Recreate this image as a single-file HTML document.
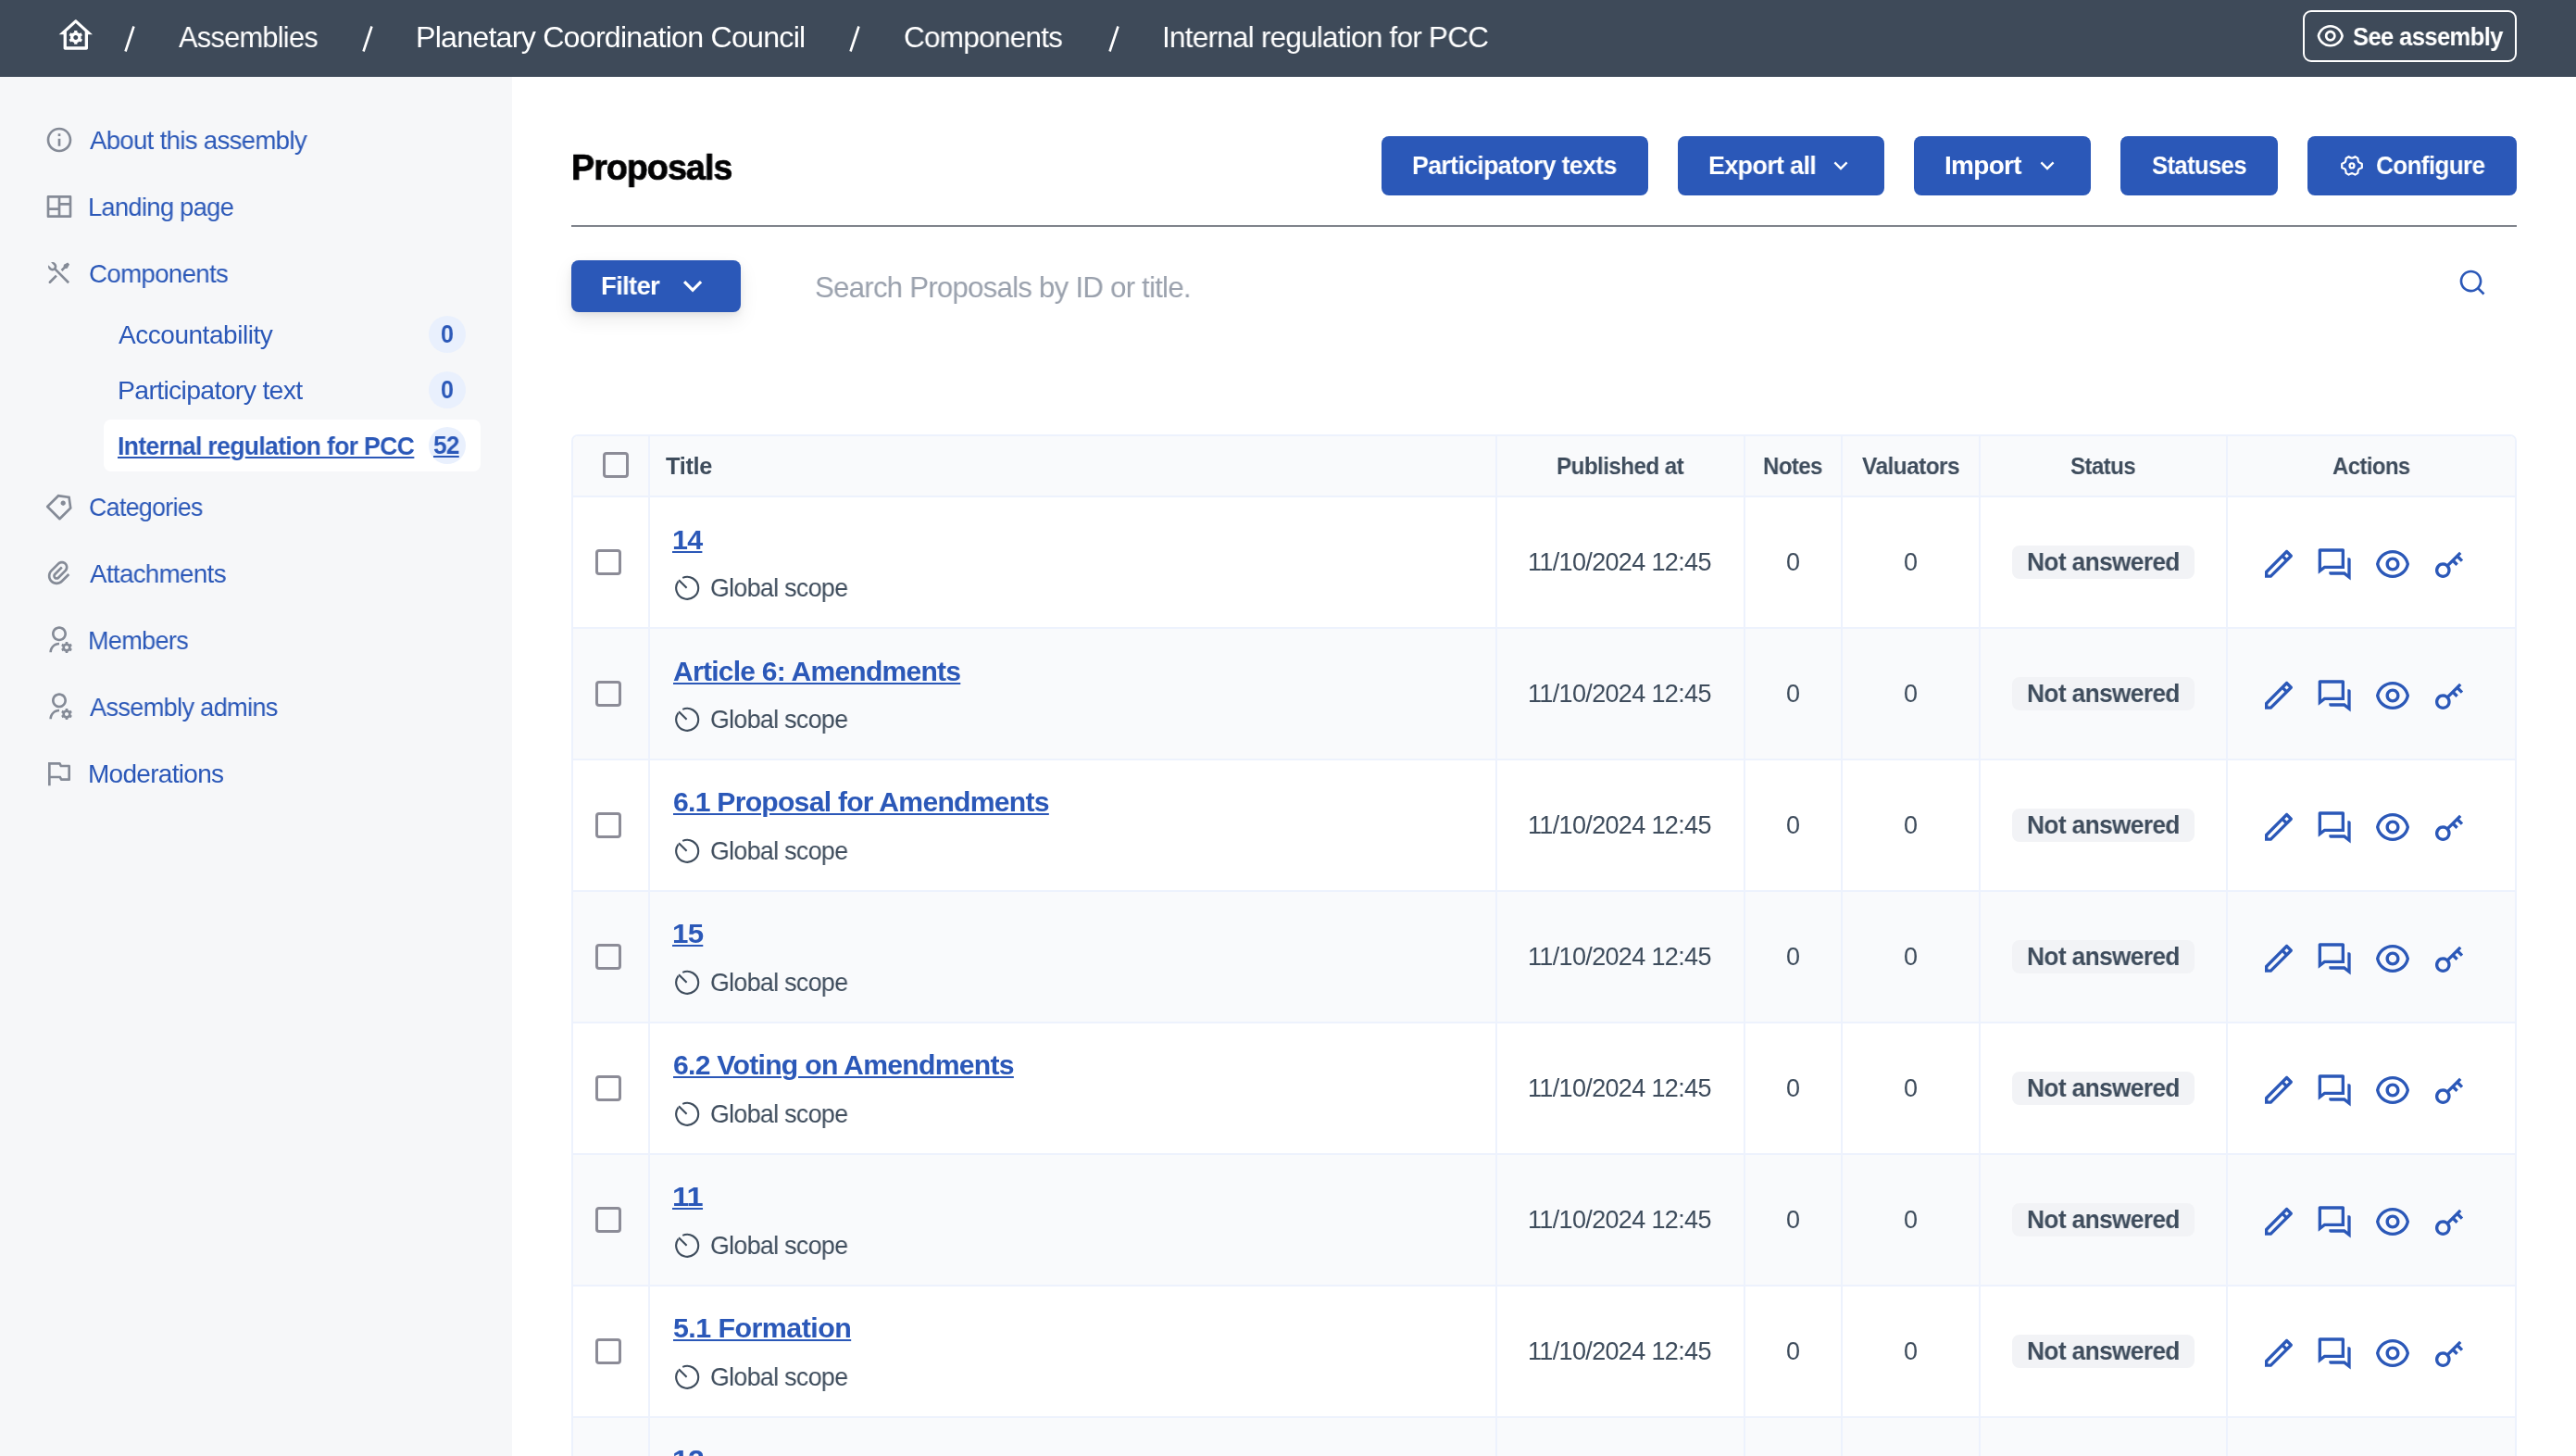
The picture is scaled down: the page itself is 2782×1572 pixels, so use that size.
<!DOCTYPE html><html><head><meta charset="utf-8"><style>
html,body{margin:0;padding:0;}
body{width:2782px;height:1572px;overflow:hidden;position:relative;background:#fff;font-family:"Liberation Sans",sans-serif;}
.t{position:absolute;white-space:nowrap;will-change:transform;}
.b{position:absolute;box-sizing:border-box;}
.i{position:absolute;display:block;}
</style></head><body>
<div class="b" style="left:0px;top:0px;width:2782px;height:83px;background:#3E4A59;"></div>
<svg class="i" style="left:62.40px;top:18.80px;width:39.60px;height:39.60px;" viewBox="0 0 24 24"><path fill="#fff" d="M19 21H5C4.44772 21 4 20.5523 4 20V11L1 11L11.3273 1.6115C11.7087 1.26475 12.2913 1.26475 12.6727 1.6115L23 11L20 11V20C20 20.5523 19.5523 21 19 21ZM6 19H18V9.15745L12 3.7029L6 9.15745V19ZM8.59117 13.8089C8.52937 13.5485 8.49666 13.2768 8.49666 12.9974C8.49666 12.7181 8.52933 12.4464 8.59109 12.186L7.59996 11.6138L8.59996 9.88174L9.59256 10.4548C9.98571 10.0829 10.4651 9.80118 10.9976 9.64273V8.49951H12.9976V9.64273C13.5301 9.80118 14.0095 10.0829 14.4026 10.4548L15.3952 9.88174L16.3952 11.6138L15.4041 12.186C15.4659 12.4464 15.4987 12.7181 15.4987 12.9974C15.4987 13.2768 15.4659 13.5485 15.4041 13.8089L16.3952 14.381L15.3952 16.1131L14.4026 15.54C14.0095 15.9119 13.5301 16.1936 12.9976 16.3521V17.4953H10.9976V16.3521C10.4651 16.1936 9.98571 15.9119 9.59256 15.54L8.59996 16.1131L7.59996 14.381L8.59117 13.8089ZM11.9976 14.4974C12.826 14.4974 13.4976 13.8258 13.4976 12.9974C13.4976 12.1691 12.826 11.4974 11.9976 11.4974C11.1693 11.4974 10.4976 12.1691 10.4976 12.9974C10.4976 13.8258 11.1693 14.4974 11.9976 14.4974Z"/></svg>
<svg class="i" style="left:134px;top:27px;width:12px;height:30px" viewBox="0 0 12 30"><path d="M10.5 1.5 L1.5 28.5" stroke="#fff" stroke-width="2.6" stroke-linecap="butt"/></svg>
<svg class="i" style="left:391px;top:27px;width:12px;height:30px" viewBox="0 0 12 30"><path d="M10.5 1.5 L1.5 28.5" stroke="#fff" stroke-width="2.6" stroke-linecap="butt"/></svg>
<svg class="i" style="left:917px;top:27px;width:12px;height:30px" viewBox="0 0 12 30"><path d="M10.5 1.5 L1.5 28.5" stroke="#fff" stroke-width="2.6" stroke-linecap="butt"/></svg>
<svg class="i" style="left:1197px;top:27px;width:12px;height:30px" viewBox="0 0 12 30"><path d="M10.5 1.5 L1.5 28.5" stroke="#fff" stroke-width="2.6" stroke-linecap="butt"/></svg>
<div class="t" style="left:193.00px;top:23.81px;font-size:32px;line-height:32px;letter-spacing:-0.800px;color:#fff;transform:scaleX(0.9631);transform-origin:0 0;">Assemblies</div>
<div class="t" style="left:449.00px;top:23.81px;font-size:32px;line-height:32px;letter-spacing:-0.800px;color:#fff;transform:scaleX(1.0078);transform-origin:0 0;">Planetary Coordination Council</div>
<div class="t" style="left:976.30px;top:23.81px;font-size:32px;line-height:32px;letter-spacing:-0.800px;color:#fff;transform:scaleX(0.9862);transform-origin:0 0;">Components</div>
<div class="t" style="left:1255.30px;top:23.81px;font-size:32px;line-height:32px;letter-spacing:-0.800px;color:#fff;transform:scaleX(0.9856);transform-origin:0 0;">Internal regulation for PCC</div>
<div class="b" style="left:2487px;top:11px;width:231px;height:56px;border:2px solid #fff;border-radius:9px;"></div>
<svg class="i" style="left:2501.10px;top:22.60px;width:31.50px;height:31.50px;" viewBox="0 0 24 24"><path fill="#fff" d="M12.0003 3C17.3924 3 21.8784 6.87976 22.8189 12C21.8784 17.1202 17.3924 21 12.0003 21C6.60812 21 2.12215 17.1202 1.18164 12C2.12215 6.87976 6.60812 3 12.0003 3ZM12.0003 19C16.2359 19 19.8603 16.052 20.7777 12C19.8603 7.94803 16.2359 5 12.0003 5C7.7646 5 4.14022 7.94803 3.22278 12C4.14022 16.052 7.7646 19 12.0003 19ZM12.0003 16.5C9.51498 16.5 7.50026 14.4853 7.50026 12C7.50026 9.51472 9.51498 7.5 12.0003 7.5C14.4855 7.5 16.5003 9.51472 16.5003 12C16.5003 14.4853 14.4855 16.5 12.0003 16.5ZM12.0003 14.5C13.381 14.5 14.5003 13.3807 14.5003 12C14.5003 10.6193 13.381 9.5 12.0003 9.5C10.6196 9.5 9.50026 10.6193 9.50026 12C9.50026 13.3807 10.6196 14.5 12.0003 14.5Z"/></svg>
<div class="t" style="left:2541.00px;top:26.30px;font-size:28px;line-height:28px;letter-spacing:-0.700px;color:#fff;transform:scaleX(0.9142);transform-origin:0 0;font-weight:700;">See assembly</div>
<div class="b" style="left:0px;top:83px;width:553px;height:1489px;background:#F6F7F9;"></div>
<div class="t" style="left:96.80px;top:137.90px;font-size:28px;line-height:28px;letter-spacing:-0.700px;color:#2B58B8;transform:scaleX(0.9857);transform-origin:0 0;">About this assembly</div>
<svg class="i" style="left:48.00px;top:134.90px;width:32.00px;height:32.00px;" viewBox="0 0 24 24"><path fill="#858B97" d="M12 22C6.47715 22 2 17.5228 2 12C2 6.47715 6.47715 2 12 2C17.5228 2 22 6.47715 22 12C22 17.5228 17.5228 22 12 22ZM12 20C16.4183 20 20 16.4183 20 12C20 7.58172 16.4183 4 12 4C7.58172 4 4 7.58172 4 12C4 16.4183 7.58172 20 12 20ZM11 7H13V9H11V7ZM11 11H13V17H11V11Z"/></svg>
<div class="t" style="left:94.80px;top:209.80px;font-size:28px;line-height:28px;letter-spacing:-0.700px;color:#2B58B8;transform:scaleX(0.9739);transform-origin:0 0;">Landing page</div>
<svg class="i" style="left:48.00px;top:206.80px;width:32.00px;height:32.00px;" viewBox="0 0 24 24"><path fill="#858B97" d="M22 20C22 20.5523 21.5523 21 21 21H3C2.44772 21 2 20.5523 2 20V4C2 3.44772 2.44772 3 3 3H21C21.5523 3 22 3.44772 22 4V20ZM11 15H4V19H11V15ZM20 11H13V19H20V11ZM11 5H4V13H11V5ZM20 5H13V9H20V5Z"/></svg>
<div class="t" style="left:95.80px;top:282.00px;font-size:28px;line-height:28px;letter-spacing:-0.700px;color:#2B58B8;transform:scaleX(0.9890);transform-origin:0 0;">Components</div>
<svg class="i" style="left:48.00px;top:279.00px;width:32.00px;height:32.00px;" viewBox="0 0 24 24"><path fill="#858B97" d="M5.32943 3.27158C6.56252 2.8332 7.9923 3.10749 8.97927 4.09446C10.1002 5.21537 10.3019 6.90741 9.5843 8.23385L20.293 18.9437L18.8788 20.3579L8.16982 9.64875C6.84325 10.3669 5.15069 10.1654 4.02952 9.04421C3.04227 8.05696 2.7681 6.62665 3.20701 5.39332L5.44373 7.63C6.02952 8.21578 6.97927 8.21578 7.56505 7.63C8.15084 7.04421 8.15084 6.09446 7.56505 5.50868L5.32943 3.27158ZM15.6968 5.15512L18.8788 3.38736L20.293 4.80157L18.5252 7.98355L16.7574 8.3371L14.6361 10.4584L13.2219 9.04421L15.3432 6.92289L15.6968 5.15512ZM8.97927 13.2868L10.3935 14.7011L5.09018 20.0044C4.69966 20.3949 4.06649 20.3949 3.67597 20.0044C3.31334 19.6417 3.28744 19.0699 3.59826 18.6774L3.67597 18.5902L8.97927 13.2868Z"/></svg>
<div class="t" style="left:95.80px;top:533.70px;font-size:28px;line-height:28px;letter-spacing:-0.700px;color:#2B58B8;transform:scaleX(0.9558);transform-origin:0 0;">Categories</div>
<svg class="i" style="left:48.00px;top:530.70px;width:32.00px;height:32.00px;" viewBox="0 0 24 24"><path fill="#858B97" d="M10.9042 2.1001L20.8037 3.51431L22.2179 13.4138L13.0255 22.6062C12.635 22.9967 12.0019 22.9967 11.6113 22.6062L1.71184 12.7067C1.32131 12.3162 1.32131 11.683 1.71184 11.2925L10.9042 2.1001ZM11.6113 4.22142L3.83316 11.9996L12.3184 20.4849L20.0966 12.7067L19.036 5.28208L11.6113 4.22142ZM13.7327 10.5854C12.9516 9.80433 12.9516 8.538 13.7327 7.75695C14.5137 6.9759 15.78 6.9759 16.5611 7.75695C17.3421 8.538 17.3421 9.80433 16.5611 10.5854C15.78 11.3664 14.5137 11.3664 13.7327 10.5854Z"/></svg>
<div class="t" style="left:96.80px;top:605.60px;font-size:28px;line-height:28px;letter-spacing:-0.700px;color:#2B58B8;transform:scaleX(0.9920);transform-origin:0 0;">Attachments</div>
<svg class="i" style="left:48.00px;top:602.60px;width:32.00px;height:32.00px;" viewBox="0 0 24 24"><path fill="#858B97" d="M14.8287 7.7574L9.1718 13.4143C8.78127 13.8048 8.78127 14.4379 9.1718 14.8285C9.56232 15.219 10.1955 15.219 10.586 14.8285L16.2429 9.17161C17.4144 8.00004 17.4144 6.10055 16.2429 4.92897C15.0713 3.7574 13.1718 3.7574 12.0002 4.92897L6.34337 10.5858C4.39075 12.5384 4.39075 15.7043 6.34337 17.6569C8.29599 19.6095 11.4618 19.6095 13.4144 17.6569L19.0713 12.0001L20.4855 13.4143L14.8287 19.0711C12.095 21.8048 7.66283 21.8048 4.92916 19.0711C2.19549 16.3374 2.19549 11.9053 4.92916 9.17161L10.586 3.51476C12.5386 1.56214 15.7045 1.56214 17.6571 3.51476C19.6097 5.46738 19.6097 8.63321 17.6571 10.5858L12.0002 16.2427C10.8287 17.4143 8.92916 17.4143 7.75759 16.2427C6.58601 15.0711 6.58601 13.1716 7.75759 12.0001L13.4144 6.34319L14.8287 7.7574Z"/></svg>
<div class="t" style="left:94.80px;top:677.60px;font-size:28px;line-height:28px;letter-spacing:-0.700px;color:#2B58B8;transform:scaleX(0.9671);transform-origin:0 0;">Members</div>
<svg class="i" style="left:48.00px;top:674.60px;width:32.00px;height:32.00px;" viewBox="0 0 24 24"><path fill="#858B97" d="M12 14V16C8.68629 16 6 18.6863 6 22H4C4 17.5817 7.58172 14 12 14ZM12 13C8.685 13 6 10.315 6 7C6 3.685 8.685 1 12 1C15.315 1 18 3.685 18 7C18 10.315 15.315 13 12 13ZM12 11C14.21 11 16 9.21 16 7C16 4.79 14.21 3 12 3C9.79 3 8 4.79 8 7C8 9.21 9.79 11 12 11ZM14.5946 18.8115C14.5327 18.5511 14.5 18.2794 14.5 18C14.5 17.7207 14.5327 17.449 14.5945 17.1886L13.6029 16.6161L14.6029 14.884L15.5952 15.4569C15.9883 15.0851 16.4676 14.8034 17 14.6449V13.5H19V14.6449C19.5324 14.8034 20.0116 15.0851 20.4047 15.4569L21.3971 14.8839L22.3972 16.616L21.4055 17.1885C21.4673 17.449 21.5 17.7207 21.5 18C21.5 18.2793 21.4673 18.551 21.4055 18.8114L22.3972 19.3839L21.3972 21.116L20.4048 20.543C20.0117 20.9149 19.5325 21.1966 19.0001 21.355V22.5H17.0001V21.3551C16.4677 21.1967 15.9884 20.915 15.5953 20.5431L14.6029 21.1161L13.6029 19.384L14.5946 18.8115ZM18 19.5C18.8284 19.5 19.5 18.8284 19.5 18C19.5 17.1716 18.8284 16.5 18 16.5C17.1716 16.5 16.5 17.1716 16.5 18C16.5 18.8284 17.1716 19.5 18 19.5Z"/></svg>
<div class="t" style="left:96.80px;top:749.70px;font-size:28px;line-height:28px;letter-spacing:-0.700px;color:#2B58B8;transform:scaleX(0.9704);transform-origin:0 0;">Assembly admins</div>
<svg class="i" style="left:48.00px;top:746.70px;width:32.00px;height:32.00px;" viewBox="0 0 24 24"><path fill="#858B97" d="M12 14V16C8.68629 16 6 18.6863 6 22H4C4 17.5817 7.58172 14 12 14ZM12 13C8.685 13 6 10.315 6 7C6 3.685 8.685 1 12 1C15.315 1 18 3.685 18 7C18 10.315 15.315 13 12 13ZM12 11C14.21 11 16 9.21 16 7C16 4.79 14.21 3 12 3C9.79 3 8 4.79 8 7C8 9.21 9.79 11 12 11ZM14.5946 18.8115C14.5327 18.5511 14.5 18.2794 14.5 18C14.5 17.7207 14.5327 17.449 14.5945 17.1886L13.6029 16.6161L14.6029 14.884L15.5952 15.4569C15.9883 15.0851 16.4676 14.8034 17 14.6449V13.5H19V14.6449C19.5324 14.8034 20.0116 15.0851 20.4047 15.4569L21.3971 14.8839L22.3972 16.616L21.4055 17.1885C21.4673 17.449 21.5 17.7207 21.5 18C21.5 18.2793 21.4673 18.551 21.4055 18.8114L22.3972 19.3839L21.3972 21.116L20.4048 20.543C20.0117 20.9149 19.5325 21.1966 19.0001 21.355V22.5H17.0001V21.3551C16.4677 21.1967 15.9884 20.915 15.5953 20.5431L14.6029 21.1161L13.6029 19.384L14.5946 18.8115ZM18 19.5C18.8284 19.5 19.5 18.8284 19.5 18C19.5 17.1716 18.8284 16.5 18 16.5C17.1716 16.5 16.5 17.1716 16.5 18C16.5 18.8284 17.1716 19.5 18 19.5Z"/></svg>
<div class="t" style="left:94.80px;top:821.70px;font-size:28px;line-height:28px;letter-spacing:-0.700px;color:#2B58B8;transform:scaleX(0.9989);transform-origin:0 0;">Moderations</div>
<svg class="i" style="left:48.00px;top:818.70px;width:32.00px;height:32.00px;" viewBox="0 0 24 24"><path fill="#858B97" d="M5 16V22H3V3H12.382C12.7607 3 13.107 3.214 13.2764 3.55279L14 5H20C20.5523 5 21 5.44772 21 6V17C21 17.5523 20.5523 18 20 18H13.618C13.2393 18 12.893 17.786 12.7236 17.4472L12 16H5ZM5 5V14H13.2361L14.2361 16H19V7H12.7639L11.7639 5H5Z"/></svg>
<div class="b" style="left:112px;top:453px;width:407px;height:56px;background:#fff;border-radius:8px;"></div>
<div class="t" style="left:128.00px;top:348.10px;font-size:28px;line-height:28px;letter-spacing:-0.462px;color:#2B58B8;">Accountability</div>
<div class="b" style="left:463px;top:341px;width:40px;height:40px;background:#E9F0FD;border-radius:50%;"></div>
<div class="t" style="left:475.50px;top:348.14px;font-size:27px;line-height:27px;letter-spacing:0.000px;color:#2B58B8;transform:scaleX(0.9308);transform-origin:0 0;font-weight:700;">0</div>
<div class="t" style="left:127.20px;top:408.10px;font-size:28px;line-height:28px;letter-spacing:-0.659px;color:#2B58B8;transform:scaleX(1.0144);transform-origin:0 0;">Participatory text</div>
<div class="b" style="left:463px;top:401px;width:40px;height:40px;background:#E9F0FD;border-radius:50%;"></div>
<div class="t" style="left:475.50px;top:408.14px;font-size:27px;line-height:27px;letter-spacing:0.000px;color:#2B58B8;transform:scaleX(0.9308);transform-origin:0 0;font-weight:700;">0</div>
<div class="t" style="left:127.20px;top:468.10px;font-size:28px;line-height:28px;letter-spacing:-0.700px;color:#2B58B8;transform:scaleX(0.9492);transform-origin:0 0;font-weight:700;text-decoration:underline;text-decoration-thickness:2px;text-underline-offset:2px;">Internal regulation for PCC</div>
<div class="b" style="left:463px;top:461px;width:40px;height:40px;background:#E9F0FD;border-radius:50%;"></div>
<div class="t" style="left:468.00px;top:468.14px;font-size:27px;line-height:27px;letter-spacing:-0.675px;color:#2B58B8;transform:scaleX(0.9724);transform-origin:0 0;font-weight:700;text-decoration:underline;text-decoration-thickness:2px;text-underline-offset:2px;">52</div>
<div class="t" style="left:617.20px;top:161.61px;font-size:38.5px;line-height:38.5px;letter-spacing:-0.963px;color:#020203;transform:scaleX(0.9773);transform-origin:0 0;font-weight:700;-webkit-text-stroke:0.7px #020203;">Proposals</div>
<div class="b" style="left:1492px;top:147px;width:288px;height:64px;background:#2B58B8;border-radius:8px;"></div>
<div class="t" style="left:1525.00px;top:165.30px;font-size:28px;line-height:28px;letter-spacing:-0.700px;color:#fff;transform:scaleX(0.9551);transform-origin:0 0;font-weight:700;">Participatory texts</div>
<div class="b" style="left:1812px;top:147px;width:223px;height:64px;background:#2B58B8;border-radius:8px;"></div>
<div class="t" style="left:1845.00px;top:165.30px;font-size:28px;line-height:28px;letter-spacing:-0.700px;color:#fff;transform:scaleX(0.9626);transform-origin:0 0;font-weight:700;">Export all</div>
<svg class="i" style="left:1973.60px;top:165.00px;width:28.00px;height:28.00px;" viewBox="0 0 24 24"><path fill="#fff" d="M11.9999 13.1714L16.9497 8.22168L18.3639 9.63589L11.9999 15.9999L5.63599 9.63589L7.0502 8.22168L11.9999 13.1714Z"/></svg>
<div class="b" style="left:2067px;top:147px;width:191px;height:64px;background:#2B58B8;border-radius:8px;"></div>
<div class="t" style="left:2100.00px;top:165.30px;font-size:28px;line-height:28px;letter-spacing:-0.700px;color:#fff;transform:scaleX(0.9968);transform-origin:0 0;font-weight:700;">Import</div>
<svg class="i" style="left:2197.20px;top:165.00px;width:28.00px;height:28.00px;" viewBox="0 0 24 24"><path fill="#fff" d="M11.9999 13.1714L16.9497 8.22168L18.3639 9.63589L11.9999 15.9999L5.63599 9.63589L7.0502 8.22168L11.9999 13.1714Z"/></svg>
<div class="b" style="left:2290px;top:147px;width:170px;height:64px;background:#2B58B8;border-radius:8px;"></div>
<div class="t" style="left:2323.80px;top:165.30px;font-size:28px;line-height:28px;letter-spacing:-0.700px;color:#fff;transform:scaleX(0.9174);transform-origin:0 0;font-weight:700;">Statuses</div>
<div class="b" style="left:2492px;top:147px;width:226px;height:64px;background:#2B58B8;border-radius:8px;"></div>
<div class="t" style="left:2565.60px;top:165.30px;font-size:28px;line-height:28px;letter-spacing:-0.700px;color:#fff;transform:scaleX(0.9321);transform-origin:0 0;font-weight:700;">Configure</div>
<svg class="i" style="left:2524px;top:163px;width:32px;height:32px" viewBox="0 0 32 32"><path d="M16 7.7 Q17.9 7.2 19.5 6.2 L22.4 7.9 Q22.3 10.6 23.4 12.1 Q25 13.2 26.8 13.7 L26.8 18.1 Q25 18.6 23.4 19.7 Q22.3 21.2 22.4 23.9 L19.5 25.6 Q17.9 24.6 16 24.1 Q14.1 24.6 12.5 25.6 L9.6 23.9 Q9.7 21.2 8.6 19.7 Q7 18.6 5.2 18.1 L5.2 13.7 Q7 13.2 8.6 12.1 Q9.7 10.6 9.6 7.9 L12.5 6.2 Q14.1 7.2 16 7.7 Z" fill="none" stroke="#fff" stroke-width="2.2" stroke-linejoin="round"/><circle cx="16" cy="15.9" r="2.45" fill="none" stroke="#fff" stroke-width="2.3"/></svg>
<div class="b" style="left:617px;top:243px;width:2101px;height:2px;background:#7F838B;"></div>
<div class="b" style="left:617px;top:281px;width:183px;height:56px;background:#2B58B8;border-radius:8px;box-shadow:0 3px 6px rgba(0,0,0,0.06),0 8px 20px rgba(0,0,0,0.085);"></div>
<div class="t" style="left:648.50px;top:295.40px;font-size:28px;line-height:28px;letter-spacing:-0.700px;color:#fff;transform:scaleX(0.9819);transform-origin:0 0;font-weight:700;">Filter</div>
<svg class="i" style="left:728.70px;top:289.90px;width:38.20px;height:38.20px;" viewBox="0 0 24 24"><path fill="#fff" d="M11.9999 13.1714L16.9497 8.22168L18.3639 9.63589L11.9999 15.9999L5.63599 9.63589L7.0502 8.22168L11.9999 13.1714Z"/></svg>
<div class="t" style="left:880.30px;top:293.91px;font-size:32px;line-height:32px;letter-spacing:-0.800px;color:#9AA1AD;transform:scaleX(0.9765);transform-origin:0 0;">Search Proposals by ID or title.</div>
<svg class="i" style="left:2654.00px;top:289.00px;width:31.70px;height:31.70px;" viewBox="0 0 24 24"><path fill="#2B58B8" d="M18.031 16.6168L22.3137 20.8995L20.8995 22.3137L16.6168 18.031C15.0769 19.263 13.124 20 11 20C6.032 20 2 15.968 2 11C2 6.032 6.032 2 11 2C15.968 2 20 6.032 20 11C20 13.124 19.263 15.0769 18.031 16.6168ZM16.0247 15.8748C17.2475 14.6146 18 12.8956 18 11C18 7.1325 14.8675 4 11 4C7.1325 4 4 7.1325 4 11C4 14.8675 7.1325 18 11 18C12.8956 18 14.6146 17.2475 15.8748 16.0247L16.0247 15.8748Z"/></svg>
<div class="b" style="left:617px;top:469px;width:2101px;height:1123px;border:2px solid #EDF2FD;border-radius:7px;background:#fff;overflow:hidden;"></div>
<div class="b" style="left:619px;top:471px;width:2097px;height:64px;background:#F9FAFC;border-radius:5px 5px 0 0;"></div>
<div class="b" style="left:619px;top:678px;width:2097px;height:142px;background:#F9FAFC;"></div>
<div class="b" style="left:619px;top:962px;width:2097px;height:142px;background:#F9FAFC;"></div>
<div class="b" style="left:619px;top:1246px;width:2097px;height:142px;background:#F9FAFC;"></div>
<div class="b" style="left:619px;top:1530px;width:2097px;height:142px;background:#F9FAFC;"></div>
<div class="b" style="left:619px;top:535px;width:2097px;height:2px;background:#EDF2FD;"></div>
<div class="b" style="left:619px;top:677px;width:2097px;height:2px;background:#EDF2FD;"></div>
<div class="b" style="left:619px;top:819px;width:2097px;height:2px;background:#EDF2FD;"></div>
<div class="b" style="left:619px;top:961px;width:2097px;height:2px;background:#EDF2FD;"></div>
<div class="b" style="left:619px;top:1103px;width:2097px;height:2px;background:#EDF2FD;"></div>
<div class="b" style="left:619px;top:1245px;width:2097px;height:2px;background:#EDF2FD;"></div>
<div class="b" style="left:619px;top:1387px;width:2097px;height:2px;background:#EDF2FD;"></div>
<div class="b" style="left:619px;top:1529px;width:2097px;height:2px;background:#EDF2FD;"></div>
<div class="b" style="left:619px;top:1671px;width:2097px;height:2px;background:#EDF2FD;"></div>
<div class="b" style="left:700px;top:471px;width:2px;height:1103px;background:#EDF2FD;"></div>
<div class="b" style="left:1615px;top:471px;width:2px;height:1103px;background:#EDF2FD;"></div>
<div class="b" style="left:1883px;top:471px;width:2px;height:1103px;background:#EDF2FD;"></div>
<div class="b" style="left:1988px;top:471px;width:2px;height:1103px;background:#EDF2FD;"></div>
<div class="b" style="left:2137px;top:471px;width:2px;height:1103px;background:#EDF2FD;"></div>
<div class="b" style="left:2404px;top:471px;width:2px;height:1103px;background:#EDF2FD;"></div>
<div class="b" style="left:651px;top:488px;width:28px;height:28px;border:3.5px solid #8C8C97;border-radius:4px;"></div>
<div class="t" style="left:719.00px;top:490.64px;font-size:25px;line-height:25px;letter-spacing:-0.325px;color:#3E4C5C;transform:scaleX(1.0143);transform-origin:0 0;font-weight:700;">Title</div>
<div class="t" style="left:1680.50px;top:490.64px;font-size:25px;line-height:25px;letter-spacing:-0.625px;color:#3E4C5C;transform:scaleX(0.9710);transform-origin:0 0;font-weight:700;">Published at</div>
<div class="t" style="left:1904.00px;top:490.64px;font-size:25px;line-height:25px;letter-spacing:-0.625px;color:#3E4C5C;transform:scaleX(0.9626);transform-origin:0 0;font-weight:700;">Notes</div>
<div class="t" style="left:2011.00px;top:490.64px;font-size:25px;line-height:25px;letter-spacing:-0.625px;color:#3E4C5C;transform:scaleX(0.9816);transform-origin:0 0;font-weight:700;">Valuators</div>
<div class="t" style="left:2235.80px;top:490.64px;font-size:25px;line-height:25px;letter-spacing:-0.625px;color:#3E4C5C;transform:scaleX(0.9634);transform-origin:0 0;font-weight:700;">Status</div>
<div class="t" style="left:2518.80px;top:490.64px;font-size:25px;line-height:25px;letter-spacing:-0.625px;color:#3E4C5C;transform:scaleX(0.9571);transform-origin:0 0;font-weight:700;">Actions</div>
<div class="b" style="left:643px;top:593px;width:28px;height:28px;border:3.5px solid #8C8C97;border-radius:4px;"></div>
<div class="t" style="left:725.50px;top:567.61px;font-size:30px;line-height:30px;letter-spacing:-0.750px;color:#2B58B8;transform:scaleX(1.0160);transform-origin:0 0;font-weight:700;text-decoration:underline;text-decoration-thickness:2px;text-underline-offset:2px;">14</div>
<svg class="i" style="left:728px;top:621.00px;width:28px;height:28px" viewBox="0 0 28 28"><path d="M9.2 2.9 A12 12 0 1 1 4.6 6.6" fill="none" stroke="#3E4C5C" stroke-width="2.1"/><path d="M5 5.2 L13.6 13.8" stroke="#3E4C5C" stroke-width="2.1"/></svg>
<div class="t" style="left:766.60px;top:621.30px;font-size:28px;line-height:28px;letter-spacing:-0.700px;color:#3E4C5C;transform:scaleX(0.9569);transform-origin:0 0;">Global scope</div>
<div class="t" style="left:1650.40px;top:594.14px;font-size:27px;line-height:27px;letter-spacing:-0.675px;color:#3E4C5C;transform:scaleX(1.0018);transform-origin:0 0;">11/10/2024 12:45</div>
<div class="t" style="left:1928.60px;top:594.14px;font-size:27px;line-height:27px;letter-spacing:0.000px;color:#3E4C5C;transform:scaleX(0.9846);transform-origin:0 0;">0</div>
<div class="t" style="left:2056.00px;top:594.14px;font-size:27px;line-height:27px;letter-spacing:0.000px;color:#3E4C5C;">0</div>
<div class="b" style="left:2173px;top:589px;width:197px;height:36px;background:#F2F3F6;border-radius:8px;"></div>
<div class="t" style="left:2189.30px;top:594.14px;font-size:27px;line-height:27px;letter-spacing:-0.675px;color:#3E4C5C;transform:scaleX(0.9756);transform-origin:0 0;font-weight:700;">Not answered</div>
<svg class="i" style="left:2441.00px;top:589.00px;width:40.00px;height:40.00px;" viewBox="0 0 24 24"><path fill="#2B58B8" d="M15.7279 9.57627L14.3137 8.16206L5 17.4758V18.89H6.41421L15.7279 9.57627ZM17.1421 8.16206L18.5563 6.74785L17.1421 5.33363L15.7279 6.74785L17.1421 8.16206ZM7.24264 20.89H3V16.6473L16.435 3.21231C16.8256 2.82179 17.4587 2.82179 17.8492 3.21231L20.6777 6.04074C21.0682 6.43126 21.0682 7.06443 20.6777 7.45495L7.24264 20.89Z"/></svg>
<svg class="i" style="left:2501.60px;top:589.00px;width:40.00px;height:40.00px;" viewBox="0 0 24 24"><path fill="#2B58B8" d="M5.45455 15L1 18.5V3C1 2.44772 1.44772 2 2 2H17C17.5523 2 18 2.44772 18 3V15H5.45455ZM4.76282 13H16V4H3V14.3851L4.76282 13ZM8 17H18.2372L20 18.3851V8H21C21.5523 8 22 8.44772 22 9V22.5L17.5455 19H9C8.44772 19 8 18.5523 8 18V17Z"/></svg>
<svg class="i" style="left:2563.80px;top:589.00px;width:40.00px;height:40.00px;" viewBox="0 0 24 24"><path fill="#2B58B8" d="M12.0003 3C17.3924 3 21.8784 6.87976 22.8189 12C21.8784 17.1202 17.3924 21 12.0003 21C6.60812 21 2.12215 17.1202 1.18164 12C2.12215 6.87976 6.60812 3 12.0003 3ZM12.0003 19C16.2359 19 19.8603 16.052 20.7777 12C19.8603 7.94803 16.2359 5 12.0003 5C7.7646 5 4.14022 7.94803 3.22278 12C4.14022 16.052 7.7646 19 12.0003 19ZM12.0003 16.5C9.51498 16.5 7.50026 14.4853 7.50026 12C7.50026 9.51472 9.51498 7.5 12.0003 7.5C14.4855 7.5 16.5003 9.51472 16.5003 12C16.5003 14.4853 14.4855 16.5 12.0003 16.5ZM12.0003 14.5C13.381 14.5 14.5003 13.3807 14.5003 12C14.5003 10.6193 13.381 9.5 12.0003 9.5C10.6196 9.5 9.50026 10.6193 9.50026 12C9.50026 13.3807 10.6196 14.5 12.0003 14.5Z"/></svg>
<svg class="i" style="left:2625.00px;top:589.00px;width:40.00px;height:40.00px;" viewBox="0 0 24 24"><path fill="#2B58B8" d="M10.7577 11.8281L18.6066 3.97919L20.0208 5.3934L18.6066 6.80761L21.0815 9.28249L19.6673 10.6967L17.1924 8.22183L15.7782 9.63604L17.8995 11.7574L16.4853 13.1716L14.364 11.0503L12.1719 13.2423C13.4581 15.1837 13.246 17.8251 11.5355 19.5355C9.58291 21.4882 6.41709 21.4882 4.46447 19.5355C2.51184 17.5829 2.51184 14.4171 4.46447 12.4645C6.17493 10.754 8.81633 10.5419 10.7577 11.8281ZM10.1213 18.1213C11.2929 16.9497 11.2929 15.0503 10.1213 13.8787C8.94975 12.7071 7.05025 12.7071 5.87868 13.8787C4.70711 15.0503 4.70711 16.9497 5.87868 18.1213C7.05025 19.2929 8.94975 19.2929 10.1213 18.1213Z"/></svg>
<div class="b" style="left:643px;top:735px;width:28px;height:28px;border:3.5px solid #8C8C97;border-radius:4px;"></div>
<div class="t" style="left:726.50px;top:709.55px;font-size:30px;line-height:30px;letter-spacing:-0.750px;color:#2B58B8;transform:scaleX(1.0013);transform-origin:0 0;font-weight:700;text-decoration:underline;text-decoration-thickness:2px;text-underline-offset:2px;">Article 6: Amendments</div>
<svg class="i" style="left:728px;top:762.94px;width:28px;height:28px" viewBox="0 0 28 28"><path d="M9.2 2.9 A12 12 0 1 1 4.6 6.6" fill="none" stroke="#3E4C5C" stroke-width="2.1"/><path d="M5 5.2 L13.6 13.8" stroke="#3E4C5C" stroke-width="2.1"/></svg>
<div class="t" style="left:766.60px;top:763.24px;font-size:28px;line-height:28px;letter-spacing:-0.700px;color:#3E4C5C;transform:scaleX(0.9569);transform-origin:0 0;">Global scope</div>
<div class="t" style="left:1650.40px;top:736.08px;font-size:27px;line-height:27px;letter-spacing:-0.675px;color:#3E4C5C;transform:scaleX(1.0018);transform-origin:0 0;">11/10/2024 12:45</div>
<div class="t" style="left:1928.60px;top:736.08px;font-size:27px;line-height:27px;letter-spacing:0.000px;color:#3E4C5C;transform:scaleX(0.9846);transform-origin:0 0;">0</div>
<div class="t" style="left:2056.00px;top:736.08px;font-size:27px;line-height:27px;letter-spacing:0.000px;color:#3E4C5C;">0</div>
<div class="b" style="left:2173px;top:731px;width:197px;height:36px;background:#F2F3F6;border-radius:8px;"></div>
<div class="t" style="left:2189.30px;top:736.08px;font-size:27px;line-height:27px;letter-spacing:-0.675px;color:#3E4C5C;transform:scaleX(0.9756);transform-origin:0 0;font-weight:700;">Not answered</div>
<svg class="i" style="left:2441.00px;top:730.94px;width:40.00px;height:40.00px;" viewBox="0 0 24 24"><path fill="#2B58B8" d="M15.7279 9.57627L14.3137 8.16206L5 17.4758V18.89H6.41421L15.7279 9.57627ZM17.1421 8.16206L18.5563 6.74785L17.1421 5.33363L15.7279 6.74785L17.1421 8.16206ZM7.24264 20.89H3V16.6473L16.435 3.21231C16.8256 2.82179 17.4587 2.82179 17.8492 3.21231L20.6777 6.04074C21.0682 6.43126 21.0682 7.06443 20.6777 7.45495L7.24264 20.89Z"/></svg>
<svg class="i" style="left:2501.60px;top:730.94px;width:40.00px;height:40.00px;" viewBox="0 0 24 24"><path fill="#2B58B8" d="M5.45455 15L1 18.5V3C1 2.44772 1.44772 2 2 2H17C17.5523 2 18 2.44772 18 3V15H5.45455ZM4.76282 13H16V4H3V14.3851L4.76282 13ZM8 17H18.2372L20 18.3851V8H21C21.5523 8 22 8.44772 22 9V22.5L17.5455 19H9C8.44772 19 8 18.5523 8 18V17Z"/></svg>
<svg class="i" style="left:2563.80px;top:730.94px;width:40.00px;height:40.00px;" viewBox="0 0 24 24"><path fill="#2B58B8" d="M12.0003 3C17.3924 3 21.8784 6.87976 22.8189 12C21.8784 17.1202 17.3924 21 12.0003 21C6.60812 21 2.12215 17.1202 1.18164 12C2.12215 6.87976 6.60812 3 12.0003 3ZM12.0003 19C16.2359 19 19.8603 16.052 20.7777 12C19.8603 7.94803 16.2359 5 12.0003 5C7.7646 5 4.14022 7.94803 3.22278 12C4.14022 16.052 7.7646 19 12.0003 19ZM12.0003 16.5C9.51498 16.5 7.50026 14.4853 7.50026 12C7.50026 9.51472 9.51498 7.5 12.0003 7.5C14.4855 7.5 16.5003 9.51472 16.5003 12C16.5003 14.4853 14.4855 16.5 12.0003 16.5ZM12.0003 14.5C13.381 14.5 14.5003 13.3807 14.5003 12C14.5003 10.6193 13.381 9.5 12.0003 9.5C10.6196 9.5 9.50026 10.6193 9.50026 12C9.50026 13.3807 10.6196 14.5 12.0003 14.5Z"/></svg>
<svg class="i" style="left:2625.00px;top:730.94px;width:40.00px;height:40.00px;" viewBox="0 0 24 24"><path fill="#2B58B8" d="M10.7577 11.8281L18.6066 3.97919L20.0208 5.3934L18.6066 6.80761L21.0815 9.28249L19.6673 10.6967L17.1924 8.22183L15.7782 9.63604L17.8995 11.7574L16.4853 13.1716L14.364 11.0503L12.1719 13.2423C13.4581 15.1837 13.246 17.8251 11.5355 19.5355C9.58291 21.4882 6.41709 21.4882 4.46447 19.5355C2.51184 17.5829 2.51184 14.4171 4.46447 12.4645C6.17493 10.754 8.81633 10.5419 10.7577 11.8281ZM10.1213 18.1213C11.2929 16.9497 11.2929 15.0503 10.1213 13.8787C8.94975 12.7071 7.05025 12.7071 5.87868 13.8787C4.70711 15.0503 4.70711 16.9497 5.87868 18.1213C7.05025 19.2929 8.94975 19.2929 10.1213 18.1213Z"/></svg>
<div class="b" style="left:643px;top:877px;width:28px;height:28px;border:3.5px solid #8C8C97;border-radius:4px;"></div>
<div class="t" style="left:726.50px;top:851.49px;font-size:30px;line-height:30px;letter-spacing:-0.750px;color:#2B58B8;transform:scaleX(1.0052);transform-origin:0 0;font-weight:700;text-decoration:underline;text-decoration-thickness:2px;text-underline-offset:2px;">6.1 Proposal for Amendments</div>
<svg class="i" style="left:728px;top:904.88px;width:28px;height:28px" viewBox="0 0 28 28"><path d="M9.2 2.9 A12 12 0 1 1 4.6 6.6" fill="none" stroke="#3E4C5C" stroke-width="2.1"/><path d="M5 5.2 L13.6 13.8" stroke="#3E4C5C" stroke-width="2.1"/></svg>
<div class="t" style="left:766.60px;top:905.18px;font-size:28px;line-height:28px;letter-spacing:-0.700px;color:#3E4C5C;transform:scaleX(0.9569);transform-origin:0 0;">Global scope</div>
<div class="t" style="left:1650.40px;top:878.02px;font-size:27px;line-height:27px;letter-spacing:-0.675px;color:#3E4C5C;transform:scaleX(1.0018);transform-origin:0 0;">11/10/2024 12:45</div>
<div class="t" style="left:1928.60px;top:878.02px;font-size:27px;line-height:27px;letter-spacing:0.000px;color:#3E4C5C;transform:scaleX(0.9846);transform-origin:0 0;">0</div>
<div class="t" style="left:2056.00px;top:878.02px;font-size:27px;line-height:27px;letter-spacing:0.000px;color:#3E4C5C;">0</div>
<div class="b" style="left:2173px;top:873px;width:197px;height:36px;background:#F2F3F6;border-radius:8px;"></div>
<div class="t" style="left:2189.30px;top:878.02px;font-size:27px;line-height:27px;letter-spacing:-0.675px;color:#3E4C5C;transform:scaleX(0.9756);transform-origin:0 0;font-weight:700;">Not answered</div>
<svg class="i" style="left:2441.00px;top:872.88px;width:40.00px;height:40.00px;" viewBox="0 0 24 24"><path fill="#2B58B8" d="M15.7279 9.57627L14.3137 8.16206L5 17.4758V18.89H6.41421L15.7279 9.57627ZM17.1421 8.16206L18.5563 6.74785L17.1421 5.33363L15.7279 6.74785L17.1421 8.16206ZM7.24264 20.89H3V16.6473L16.435 3.21231C16.8256 2.82179 17.4587 2.82179 17.8492 3.21231L20.6777 6.04074C21.0682 6.43126 21.0682 7.06443 20.6777 7.45495L7.24264 20.89Z"/></svg>
<svg class="i" style="left:2501.60px;top:872.88px;width:40.00px;height:40.00px;" viewBox="0 0 24 24"><path fill="#2B58B8" d="M5.45455 15L1 18.5V3C1 2.44772 1.44772 2 2 2H17C17.5523 2 18 2.44772 18 3V15H5.45455ZM4.76282 13H16V4H3V14.3851L4.76282 13ZM8 17H18.2372L20 18.3851V8H21C21.5523 8 22 8.44772 22 9V22.5L17.5455 19H9C8.44772 19 8 18.5523 8 18V17Z"/></svg>
<svg class="i" style="left:2563.80px;top:872.88px;width:40.00px;height:40.00px;" viewBox="0 0 24 24"><path fill="#2B58B8" d="M12.0003 3C17.3924 3 21.8784 6.87976 22.8189 12C21.8784 17.1202 17.3924 21 12.0003 21C6.60812 21 2.12215 17.1202 1.18164 12C2.12215 6.87976 6.60812 3 12.0003 3ZM12.0003 19C16.2359 19 19.8603 16.052 20.7777 12C19.8603 7.94803 16.2359 5 12.0003 5C7.7646 5 4.14022 7.94803 3.22278 12C4.14022 16.052 7.7646 19 12.0003 19ZM12.0003 16.5C9.51498 16.5 7.50026 14.4853 7.50026 12C7.50026 9.51472 9.51498 7.5 12.0003 7.5C14.4855 7.5 16.5003 9.51472 16.5003 12C16.5003 14.4853 14.4855 16.5 12.0003 16.5ZM12.0003 14.5C13.381 14.5 14.5003 13.3807 14.5003 12C14.5003 10.6193 13.381 9.5 12.0003 9.5C10.6196 9.5 9.50026 10.6193 9.50026 12C9.50026 13.3807 10.6196 14.5 12.0003 14.5Z"/></svg>
<svg class="i" style="left:2625.00px;top:872.88px;width:40.00px;height:40.00px;" viewBox="0 0 24 24"><path fill="#2B58B8" d="M10.7577 11.8281L18.6066 3.97919L20.0208 5.3934L18.6066 6.80761L21.0815 9.28249L19.6673 10.6967L17.1924 8.22183L15.7782 9.63604L17.8995 11.7574L16.4853 13.1716L14.364 11.0503L12.1719 13.2423C13.4581 15.1837 13.246 17.8251 11.5355 19.5355C9.58291 21.4882 6.41709 21.4882 4.46447 19.5355C2.51184 17.5829 2.51184 14.4171 4.46447 12.4645C6.17493 10.754 8.81633 10.5419 10.7577 11.8281ZM10.1213 18.1213C11.2929 16.9497 11.2929 15.0503 10.1213 13.8787C8.94975 12.7071 7.05025 12.7071 5.87868 13.8787C4.70711 15.0503 4.70711 16.9497 5.87868 18.1213C7.05025 19.2929 8.94975 19.2929 10.1213 18.1213Z"/></svg>
<div class="b" style="left:643px;top:1019px;width:28px;height:28px;border:3.5px solid #8C8C97;border-radius:4px;"></div>
<div class="t" style="left:725.50px;top:993.42px;font-size:30px;line-height:30px;letter-spacing:-0.750px;color:#2B58B8;transform:scaleX(1.0437);transform-origin:0 0;font-weight:700;text-decoration:underline;text-decoration-thickness:2px;text-underline-offset:2px;">15</div>
<svg class="i" style="left:728px;top:1046.82px;width:28px;height:28px" viewBox="0 0 28 28"><path d="M9.2 2.9 A12 12 0 1 1 4.6 6.6" fill="none" stroke="#3E4C5C" stroke-width="2.1"/><path d="M5 5.2 L13.6 13.8" stroke="#3E4C5C" stroke-width="2.1"/></svg>
<div class="t" style="left:766.60px;top:1047.12px;font-size:28px;line-height:28px;letter-spacing:-0.700px;color:#3E4C5C;transform:scaleX(0.9569);transform-origin:0 0;">Global scope</div>
<div class="t" style="left:1650.40px;top:1019.96px;font-size:27px;line-height:27px;letter-spacing:-0.675px;color:#3E4C5C;transform:scaleX(1.0018);transform-origin:0 0;">11/10/2024 12:45</div>
<div class="t" style="left:1928.60px;top:1019.96px;font-size:27px;line-height:27px;letter-spacing:0.000px;color:#3E4C5C;transform:scaleX(0.9846);transform-origin:0 0;">0</div>
<div class="t" style="left:2056.00px;top:1019.96px;font-size:27px;line-height:27px;letter-spacing:0.000px;color:#3E4C5C;">0</div>
<div class="b" style="left:2173px;top:1015px;width:197px;height:36px;background:#F2F3F6;border-radius:8px;"></div>
<div class="t" style="left:2189.30px;top:1019.96px;font-size:27px;line-height:27px;letter-spacing:-0.675px;color:#3E4C5C;transform:scaleX(0.9756);transform-origin:0 0;font-weight:700;">Not answered</div>
<svg class="i" style="left:2441.00px;top:1014.82px;width:40.00px;height:40.00px;" viewBox="0 0 24 24"><path fill="#2B58B8" d="M15.7279 9.57627L14.3137 8.16206L5 17.4758V18.89H6.41421L15.7279 9.57627ZM17.1421 8.16206L18.5563 6.74785L17.1421 5.33363L15.7279 6.74785L17.1421 8.16206ZM7.24264 20.89H3V16.6473L16.435 3.21231C16.8256 2.82179 17.4587 2.82179 17.8492 3.21231L20.6777 6.04074C21.0682 6.43126 21.0682 7.06443 20.6777 7.45495L7.24264 20.89Z"/></svg>
<svg class="i" style="left:2501.60px;top:1014.82px;width:40.00px;height:40.00px;" viewBox="0 0 24 24"><path fill="#2B58B8" d="M5.45455 15L1 18.5V3C1 2.44772 1.44772 2 2 2H17C17.5523 2 18 2.44772 18 3V15H5.45455ZM4.76282 13H16V4H3V14.3851L4.76282 13ZM8 17H18.2372L20 18.3851V8H21C21.5523 8 22 8.44772 22 9V22.5L17.5455 19H9C8.44772 19 8 18.5523 8 18V17Z"/></svg>
<svg class="i" style="left:2563.80px;top:1014.82px;width:40.00px;height:40.00px;" viewBox="0 0 24 24"><path fill="#2B58B8" d="M12.0003 3C17.3924 3 21.8784 6.87976 22.8189 12C21.8784 17.1202 17.3924 21 12.0003 21C6.60812 21 2.12215 17.1202 1.18164 12C2.12215 6.87976 6.60812 3 12.0003 3ZM12.0003 19C16.2359 19 19.8603 16.052 20.7777 12C19.8603 7.94803 16.2359 5 12.0003 5C7.7646 5 4.14022 7.94803 3.22278 12C4.14022 16.052 7.7646 19 12.0003 19ZM12.0003 16.5C9.51498 16.5 7.50026 14.4853 7.50026 12C7.50026 9.51472 9.51498 7.5 12.0003 7.5C14.4855 7.5 16.5003 9.51472 16.5003 12C16.5003 14.4853 14.4855 16.5 12.0003 16.5ZM12.0003 14.5C13.381 14.5 14.5003 13.3807 14.5003 12C14.5003 10.6193 13.381 9.5 12.0003 9.5C10.6196 9.5 9.50026 10.6193 9.50026 12C9.50026 13.3807 10.6196 14.5 12.0003 14.5Z"/></svg>
<svg class="i" style="left:2625.00px;top:1014.82px;width:40.00px;height:40.00px;" viewBox="0 0 24 24"><path fill="#2B58B8" d="M10.7577 11.8281L18.6066 3.97919L20.0208 5.3934L18.6066 6.80761L21.0815 9.28249L19.6673 10.6967L17.1924 8.22183L15.7782 9.63604L17.8995 11.7574L16.4853 13.1716L14.364 11.0503L12.1719 13.2423C13.4581 15.1837 13.246 17.8251 11.5355 19.5355C9.58291 21.4882 6.41709 21.4882 4.46447 19.5355C2.51184 17.5829 2.51184 14.4171 4.46447 12.4645C6.17493 10.754 8.81633 10.5419 10.7577 11.8281ZM10.1213 18.1213C11.2929 16.9497 11.2929 15.0503 10.1213 13.8787C8.94975 12.7071 7.05025 12.7071 5.87868 13.8787C4.70711 15.0503 4.70711 16.9497 5.87868 18.1213C7.05025 19.2929 8.94975 19.2929 10.1213 18.1213Z"/></svg>
<div class="b" style="left:643px;top:1161px;width:28px;height:28px;border:3.5px solid #8C8C97;border-radius:4px;"></div>
<div class="t" style="left:726.50px;top:1135.37px;font-size:30px;line-height:30px;letter-spacing:-0.735px;color:#2B58B8;transform:scaleX(1.0058);transform-origin:0 0;font-weight:700;text-decoration:underline;text-decoration-thickness:2px;text-underline-offset:2px;">6.2 Voting on Amendments</div>
<svg class="i" style="left:728px;top:1188.76px;width:28px;height:28px" viewBox="0 0 28 28"><path d="M9.2 2.9 A12 12 0 1 1 4.6 6.6" fill="none" stroke="#3E4C5C" stroke-width="2.1"/><path d="M5 5.2 L13.6 13.8" stroke="#3E4C5C" stroke-width="2.1"/></svg>
<div class="t" style="left:766.60px;top:1189.06px;font-size:28px;line-height:28px;letter-spacing:-0.700px;color:#3E4C5C;transform:scaleX(0.9569);transform-origin:0 0;">Global scope</div>
<div class="t" style="left:1650.40px;top:1161.90px;font-size:27px;line-height:27px;letter-spacing:-0.675px;color:#3E4C5C;transform:scaleX(1.0018);transform-origin:0 0;">11/10/2024 12:45</div>
<div class="t" style="left:1928.60px;top:1161.90px;font-size:27px;line-height:27px;letter-spacing:0.000px;color:#3E4C5C;transform:scaleX(0.9846);transform-origin:0 0;">0</div>
<div class="t" style="left:2056.00px;top:1161.90px;font-size:27px;line-height:27px;letter-spacing:0.000px;color:#3E4C5C;">0</div>
<div class="b" style="left:2173px;top:1157px;width:197px;height:36px;background:#F2F3F6;border-radius:8px;"></div>
<div class="t" style="left:2189.30px;top:1161.90px;font-size:27px;line-height:27px;letter-spacing:-0.675px;color:#3E4C5C;transform:scaleX(0.9756);transform-origin:0 0;font-weight:700;">Not answered</div>
<svg class="i" style="left:2441.00px;top:1156.76px;width:40.00px;height:40.00px;" viewBox="0 0 24 24"><path fill="#2B58B8" d="M15.7279 9.57627L14.3137 8.16206L5 17.4758V18.89H6.41421L15.7279 9.57627ZM17.1421 8.16206L18.5563 6.74785L17.1421 5.33363L15.7279 6.74785L17.1421 8.16206ZM7.24264 20.89H3V16.6473L16.435 3.21231C16.8256 2.82179 17.4587 2.82179 17.8492 3.21231L20.6777 6.04074C21.0682 6.43126 21.0682 7.06443 20.6777 7.45495L7.24264 20.89Z"/></svg>
<svg class="i" style="left:2501.60px;top:1156.76px;width:40.00px;height:40.00px;" viewBox="0 0 24 24"><path fill="#2B58B8" d="M5.45455 15L1 18.5V3C1 2.44772 1.44772 2 2 2H17C17.5523 2 18 2.44772 18 3V15H5.45455ZM4.76282 13H16V4H3V14.3851L4.76282 13ZM8 17H18.2372L20 18.3851V8H21C21.5523 8 22 8.44772 22 9V22.5L17.5455 19H9C8.44772 19 8 18.5523 8 18V17Z"/></svg>
<svg class="i" style="left:2563.80px;top:1156.76px;width:40.00px;height:40.00px;" viewBox="0 0 24 24"><path fill="#2B58B8" d="M12.0003 3C17.3924 3 21.8784 6.87976 22.8189 12C21.8784 17.1202 17.3924 21 12.0003 21C6.60812 21 2.12215 17.1202 1.18164 12C2.12215 6.87976 6.60812 3 12.0003 3ZM12.0003 19C16.2359 19 19.8603 16.052 20.7777 12C19.8603 7.94803 16.2359 5 12.0003 5C7.7646 5 4.14022 7.94803 3.22278 12C4.14022 16.052 7.7646 19 12.0003 19ZM12.0003 16.5C9.51498 16.5 7.50026 14.4853 7.50026 12C7.50026 9.51472 9.51498 7.5 12.0003 7.5C14.4855 7.5 16.5003 9.51472 16.5003 12C16.5003 14.4853 14.4855 16.5 12.0003 16.5ZM12.0003 14.5C13.381 14.5 14.5003 13.3807 14.5003 12C14.5003 10.6193 13.381 9.5 12.0003 9.5C10.6196 9.5 9.50026 10.6193 9.50026 12C9.50026 13.3807 10.6196 14.5 12.0003 14.5Z"/></svg>
<svg class="i" style="left:2625.00px;top:1156.76px;width:40.00px;height:40.00px;" viewBox="0 0 24 24"><path fill="#2B58B8" d="M10.7577 11.8281L18.6066 3.97919L20.0208 5.3934L18.6066 6.80761L21.0815 9.28249L19.6673 10.6967L17.1924 8.22183L15.7782 9.63604L17.8995 11.7574L16.4853 13.1716L14.364 11.0503L12.1719 13.2423C13.4581 15.1837 13.246 17.8251 11.5355 19.5355C9.58291 21.4882 6.41709 21.4882 4.46447 19.5355C2.51184 17.5829 2.51184 14.4171 4.46447 12.4645C6.17493 10.754 8.81633 10.5419 10.7577 11.8281ZM10.1213 18.1213C11.2929 16.9497 11.2929 15.0503 10.1213 13.8787C8.94975 12.7071 7.05025 12.7071 5.87868 13.8787C4.70711 15.0503 4.70711 16.9497 5.87868 18.1213C7.05025 19.2929 8.94975 19.2929 10.1213 18.1213Z"/></svg>
<div class="b" style="left:643px;top:1303px;width:28px;height:28px;border:3.5px solid #8C8C97;border-radius:4px;"></div>
<div class="t" style="left:725.50px;top:1277.31px;font-size:30px;line-height:30px;letter-spacing:-0.600px;color:#2B58B8;transform:scaleX(1.0828);transform-origin:0 0;font-weight:700;text-decoration:underline;text-decoration-thickness:2px;text-underline-offset:2px;">11</div>
<svg class="i" style="left:728px;top:1330.70px;width:28px;height:28px" viewBox="0 0 28 28"><path d="M9.2 2.9 A12 12 0 1 1 4.6 6.6" fill="none" stroke="#3E4C5C" stroke-width="2.1"/><path d="M5 5.2 L13.6 13.8" stroke="#3E4C5C" stroke-width="2.1"/></svg>
<div class="t" style="left:766.60px;top:1331.00px;font-size:28px;line-height:28px;letter-spacing:-0.700px;color:#3E4C5C;transform:scaleX(0.9569);transform-origin:0 0;">Global scope</div>
<div class="t" style="left:1650.40px;top:1303.84px;font-size:27px;line-height:27px;letter-spacing:-0.675px;color:#3E4C5C;transform:scaleX(1.0018);transform-origin:0 0;">11/10/2024 12:45</div>
<div class="t" style="left:1928.60px;top:1303.84px;font-size:27px;line-height:27px;letter-spacing:0.000px;color:#3E4C5C;transform:scaleX(0.9846);transform-origin:0 0;">0</div>
<div class="t" style="left:2056.00px;top:1303.84px;font-size:27px;line-height:27px;letter-spacing:0.000px;color:#3E4C5C;">0</div>
<div class="b" style="left:2173px;top:1299px;width:197px;height:36px;background:#F2F3F6;border-radius:8px;"></div>
<div class="t" style="left:2189.30px;top:1303.84px;font-size:27px;line-height:27px;letter-spacing:-0.675px;color:#3E4C5C;transform:scaleX(0.9756);transform-origin:0 0;font-weight:700;">Not answered</div>
<svg class="i" style="left:2441.00px;top:1298.70px;width:40.00px;height:40.00px;" viewBox="0 0 24 24"><path fill="#2B58B8" d="M15.7279 9.57627L14.3137 8.16206L5 17.4758V18.89H6.41421L15.7279 9.57627ZM17.1421 8.16206L18.5563 6.74785L17.1421 5.33363L15.7279 6.74785L17.1421 8.16206ZM7.24264 20.89H3V16.6473L16.435 3.21231C16.8256 2.82179 17.4587 2.82179 17.8492 3.21231L20.6777 6.04074C21.0682 6.43126 21.0682 7.06443 20.6777 7.45495L7.24264 20.89Z"/></svg>
<svg class="i" style="left:2501.60px;top:1298.70px;width:40.00px;height:40.00px;" viewBox="0 0 24 24"><path fill="#2B58B8" d="M5.45455 15L1 18.5V3C1 2.44772 1.44772 2 2 2H17C17.5523 2 18 2.44772 18 3V15H5.45455ZM4.76282 13H16V4H3V14.3851L4.76282 13ZM8 17H18.2372L20 18.3851V8H21C21.5523 8 22 8.44772 22 9V22.5L17.5455 19H9C8.44772 19 8 18.5523 8 18V17Z"/></svg>
<svg class="i" style="left:2563.80px;top:1298.70px;width:40.00px;height:40.00px;" viewBox="0 0 24 24"><path fill="#2B58B8" d="M12.0003 3C17.3924 3 21.8784 6.87976 22.8189 12C21.8784 17.1202 17.3924 21 12.0003 21C6.60812 21 2.12215 17.1202 1.18164 12C2.12215 6.87976 6.60812 3 12.0003 3ZM12.0003 19C16.2359 19 19.8603 16.052 20.7777 12C19.8603 7.94803 16.2359 5 12.0003 5C7.7646 5 4.14022 7.94803 3.22278 12C4.14022 16.052 7.7646 19 12.0003 19ZM12.0003 16.5C9.51498 16.5 7.50026 14.4853 7.50026 12C7.50026 9.51472 9.51498 7.5 12.0003 7.5C14.4855 7.5 16.5003 9.51472 16.5003 12C16.5003 14.4853 14.4855 16.5 12.0003 16.5ZM12.0003 14.5C13.381 14.5 14.5003 13.3807 14.5003 12C14.5003 10.6193 13.381 9.5 12.0003 9.5C10.6196 9.5 9.50026 10.6193 9.50026 12C9.50026 13.3807 10.6196 14.5 12.0003 14.5Z"/></svg>
<svg class="i" style="left:2625.00px;top:1298.70px;width:40.00px;height:40.00px;" viewBox="0 0 24 24"><path fill="#2B58B8" d="M10.7577 11.8281L18.6066 3.97919L20.0208 5.3934L18.6066 6.80761L21.0815 9.28249L19.6673 10.6967L17.1924 8.22183L15.7782 9.63604L17.8995 11.7574L16.4853 13.1716L14.364 11.0503L12.1719 13.2423C13.4581 15.1837 13.246 17.8251 11.5355 19.5355C9.58291 21.4882 6.41709 21.4882 4.46447 19.5355C2.51184 17.5829 2.51184 14.4171 4.46447 12.4645C6.17493 10.754 8.81633 10.5419 10.7577 11.8281ZM10.1213 18.1213C11.2929 16.9497 11.2929 15.0503 10.1213 13.8787C8.94975 12.7071 7.05025 12.7071 5.87868 13.8787C4.70711 15.0503 4.70711 16.9497 5.87868 18.1213C7.05025 19.2929 8.94975 19.2929 10.1213 18.1213Z"/></svg>
<div class="b" style="left:643px;top:1445px;width:28px;height:28px;border:3.5px solid #8C8C97;border-radius:4px;"></div>
<div class="t" style="left:726.50px;top:1419.24px;font-size:30px;line-height:30px;letter-spacing:-0.542px;color:#2B58B8;transform:scaleX(1.0133);transform-origin:0 0;font-weight:700;text-decoration:underline;text-decoration-thickness:2px;text-underline-offset:2px;">5.1 Formation</div>
<svg class="i" style="left:728px;top:1472.64px;width:28px;height:28px" viewBox="0 0 28 28"><path d="M9.2 2.9 A12 12 0 1 1 4.6 6.6" fill="none" stroke="#3E4C5C" stroke-width="2.1"/><path d="M5 5.2 L13.6 13.8" stroke="#3E4C5C" stroke-width="2.1"/></svg>
<div class="t" style="left:766.60px;top:1472.94px;font-size:28px;line-height:28px;letter-spacing:-0.700px;color:#3E4C5C;transform:scaleX(0.9569);transform-origin:0 0;">Global scope</div>
<div class="t" style="left:1650.40px;top:1445.78px;font-size:27px;line-height:27px;letter-spacing:-0.675px;color:#3E4C5C;transform:scaleX(1.0018);transform-origin:0 0;">11/10/2024 12:45</div>
<div class="t" style="left:1928.60px;top:1445.78px;font-size:27px;line-height:27px;letter-spacing:0.000px;color:#3E4C5C;transform:scaleX(0.9846);transform-origin:0 0;">0</div>
<div class="t" style="left:2056.00px;top:1445.78px;font-size:27px;line-height:27px;letter-spacing:0.000px;color:#3E4C5C;">0</div>
<div class="b" style="left:2173px;top:1441px;width:197px;height:36px;background:#F2F3F6;border-radius:8px;"></div>
<div class="t" style="left:2189.30px;top:1445.78px;font-size:27px;line-height:27px;letter-spacing:-0.675px;color:#3E4C5C;transform:scaleX(0.9756);transform-origin:0 0;font-weight:700;">Not answered</div>
<svg class="i" style="left:2441.00px;top:1440.64px;width:40.00px;height:40.00px;" viewBox="0 0 24 24"><path fill="#2B58B8" d="M15.7279 9.57627L14.3137 8.16206L5 17.4758V18.89H6.41421L15.7279 9.57627ZM17.1421 8.16206L18.5563 6.74785L17.1421 5.33363L15.7279 6.74785L17.1421 8.16206ZM7.24264 20.89H3V16.6473L16.435 3.21231C16.8256 2.82179 17.4587 2.82179 17.8492 3.21231L20.6777 6.04074C21.0682 6.43126 21.0682 7.06443 20.6777 7.45495L7.24264 20.89Z"/></svg>
<svg class="i" style="left:2501.60px;top:1440.64px;width:40.00px;height:40.00px;" viewBox="0 0 24 24"><path fill="#2B58B8" d="M5.45455 15L1 18.5V3C1 2.44772 1.44772 2 2 2H17C17.5523 2 18 2.44772 18 3V15H5.45455ZM4.76282 13H16V4H3V14.3851L4.76282 13ZM8 17H18.2372L20 18.3851V8H21C21.5523 8 22 8.44772 22 9V22.5L17.5455 19H9C8.44772 19 8 18.5523 8 18V17Z"/></svg>
<svg class="i" style="left:2563.80px;top:1440.64px;width:40.00px;height:40.00px;" viewBox="0 0 24 24"><path fill="#2B58B8" d="M12.0003 3C17.3924 3 21.8784 6.87976 22.8189 12C21.8784 17.1202 17.3924 21 12.0003 21C6.60812 21 2.12215 17.1202 1.18164 12C2.12215 6.87976 6.60812 3 12.0003 3ZM12.0003 19C16.2359 19 19.8603 16.052 20.7777 12C19.8603 7.94803 16.2359 5 12.0003 5C7.7646 5 4.14022 7.94803 3.22278 12C4.14022 16.052 7.7646 19 12.0003 19ZM12.0003 16.5C9.51498 16.5 7.50026 14.4853 7.50026 12C7.50026 9.51472 9.51498 7.5 12.0003 7.5C14.4855 7.5 16.5003 9.51472 16.5003 12C16.5003 14.4853 14.4855 16.5 12.0003 16.5ZM12.0003 14.5C13.381 14.5 14.5003 13.3807 14.5003 12C14.5003 10.6193 13.381 9.5 12.0003 9.5C10.6196 9.5 9.50026 10.6193 9.50026 12C9.50026 13.3807 10.6196 14.5 12.0003 14.5Z"/></svg>
<svg class="i" style="left:2625.00px;top:1440.64px;width:40.00px;height:40.00px;" viewBox="0 0 24 24"><path fill="#2B58B8" d="M10.7577 11.8281L18.6066 3.97919L20.0208 5.3934L18.6066 6.80761L21.0815 9.28249L19.6673 10.6967L17.1924 8.22183L15.7782 9.63604L17.8995 11.7574L16.4853 13.1716L14.364 11.0503L12.1719 13.2423C13.4581 15.1837 13.246 17.8251 11.5355 19.5355C9.58291 21.4882 6.41709 21.4882 4.46447 19.5355C2.51184 17.5829 2.51184 14.4171 4.46447 12.4645C6.17493 10.754 8.81633 10.5419 10.7577 11.8281ZM10.1213 18.1213C11.2929 16.9497 11.2929 15.0503 10.1213 13.8787C8.94975 12.7071 7.05025 12.7071 5.87868 13.8787C4.70711 15.0503 4.70711 16.9497 5.87868 18.1213C7.05025 19.2929 8.94975 19.2929 10.1213 18.1213Z"/></svg>
<div class="b" style="left:643px;top:1587px;width:28px;height:28px;border:3.5px solid #8C8C97;border-radius:4px;"></div>
<div class="t" style="left:725.50px;top:1561.18px;font-size:30px;line-height:30px;letter-spacing:-0.750px;color:#2B58B8;transform:scaleX(1.0609);transform-origin:0 0;font-weight:700;text-decoration:underline;text-decoration-thickness:2px;text-underline-offset:2px;">12</div>
<svg class="i" style="left:728px;top:1614.58px;width:28px;height:28px" viewBox="0 0 28 28"><path d="M9.2 2.9 A12 12 0 1 1 4.6 6.6" fill="none" stroke="#3E4C5C" stroke-width="2.1"/><path d="M5 5.2 L13.6 13.8" stroke="#3E4C5C" stroke-width="2.1"/></svg>
<div class="t" style="left:766.60px;top:1614.88px;font-size:28px;line-height:28px;letter-spacing:-0.700px;color:#3E4C5C;transform:scaleX(0.9569);transform-origin:0 0;">Global scope</div>
<div class="t" style="left:1650.40px;top:1587.72px;font-size:27px;line-height:27px;letter-spacing:-0.675px;color:#3E4C5C;transform:scaleX(1.0018);transform-origin:0 0;">11/10/2024 12:45</div>
<div class="t" style="left:1928.60px;top:1587.72px;font-size:27px;line-height:27px;letter-spacing:0.000px;color:#3E4C5C;transform:scaleX(0.9846);transform-origin:0 0;">0</div>
<div class="t" style="left:2056.00px;top:1587.72px;font-size:27px;line-height:27px;letter-spacing:0.000px;color:#3E4C5C;">0</div>
<div class="b" style="left:2173px;top:1583px;width:197px;height:36px;background:#F2F3F6;border-radius:8px;"></div>
<div class="t" style="left:2189.30px;top:1587.72px;font-size:27px;line-height:27px;letter-spacing:-0.675px;color:#3E4C5C;transform:scaleX(0.9756);transform-origin:0 0;font-weight:700;">Not answered</div>
<svg class="i" style="left:2441.00px;top:1582.58px;width:40.00px;height:40.00px;" viewBox="0 0 24 24"><path fill="#2B58B8" d="M15.7279 9.57627L14.3137 8.16206L5 17.4758V18.89H6.41421L15.7279 9.57627ZM17.1421 8.16206L18.5563 6.74785L17.1421 5.33363L15.7279 6.74785L17.1421 8.16206ZM7.24264 20.89H3V16.6473L16.435 3.21231C16.8256 2.82179 17.4587 2.82179 17.8492 3.21231L20.6777 6.04074C21.0682 6.43126 21.0682 7.06443 20.6777 7.45495L7.24264 20.89Z"/></svg>
<svg class="i" style="left:2501.60px;top:1582.58px;width:40.00px;height:40.00px;" viewBox="0 0 24 24"><path fill="#2B58B8" d="M5.45455 15L1 18.5V3C1 2.44772 1.44772 2 2 2H17C17.5523 2 18 2.44772 18 3V15H5.45455ZM4.76282 13H16V4H3V14.3851L4.76282 13ZM8 17H18.2372L20 18.3851V8H21C21.5523 8 22 8.44772 22 9V22.5L17.5455 19H9C8.44772 19 8 18.5523 8 18V17Z"/></svg>
<svg class="i" style="left:2563.80px;top:1582.58px;width:40.00px;height:40.00px;" viewBox="0 0 24 24"><path fill="#2B58B8" d="M12.0003 3C17.3924 3 21.8784 6.87976 22.8189 12C21.8784 17.1202 17.3924 21 12.0003 21C6.60812 21 2.12215 17.1202 1.18164 12C2.12215 6.87976 6.60812 3 12.0003 3ZM12.0003 19C16.2359 19 19.8603 16.052 20.7777 12C19.8603 7.94803 16.2359 5 12.0003 5C7.7646 5 4.14022 7.94803 3.22278 12C4.14022 16.052 7.7646 19 12.0003 19ZM12.0003 16.5C9.51498 16.5 7.50026 14.4853 7.50026 12C7.50026 9.51472 9.51498 7.5 12.0003 7.5C14.4855 7.5 16.5003 9.51472 16.5003 12C16.5003 14.4853 14.4855 16.5 12.0003 16.5ZM12.0003 14.5C13.381 14.5 14.5003 13.3807 14.5003 12C14.5003 10.6193 13.381 9.5 12.0003 9.5C10.6196 9.5 9.50026 10.6193 9.50026 12C9.50026 13.3807 10.6196 14.5 12.0003 14.5Z"/></svg>
<svg class="i" style="left:2625.00px;top:1582.58px;width:40.00px;height:40.00px;" viewBox="0 0 24 24"><path fill="#2B58B8" d="M10.7577 11.8281L18.6066 3.97919L20.0208 5.3934L18.6066 6.80761L21.0815 9.28249L19.6673 10.6967L17.1924 8.22183L15.7782 9.63604L17.8995 11.7574L16.4853 13.1716L14.364 11.0503L12.1719 13.2423C13.4581 15.1837 13.246 17.8251 11.5355 19.5355C9.58291 21.4882 6.41709 21.4882 4.46447 19.5355C2.51184 17.5829 2.51184 14.4171 4.46447 12.4645C6.17493 10.754 8.81633 10.5419 10.7577 11.8281ZM10.1213 18.1213C11.2929 16.9497 11.2929 15.0503 10.1213 13.8787C8.94975 12.7071 7.05025 12.7071 5.87868 13.8787C4.70711 15.0503 4.70711 16.9497 5.87868 18.1213C7.05025 19.2929 8.94975 19.2929 10.1213 18.1213Z"/></svg>
</body></html>
